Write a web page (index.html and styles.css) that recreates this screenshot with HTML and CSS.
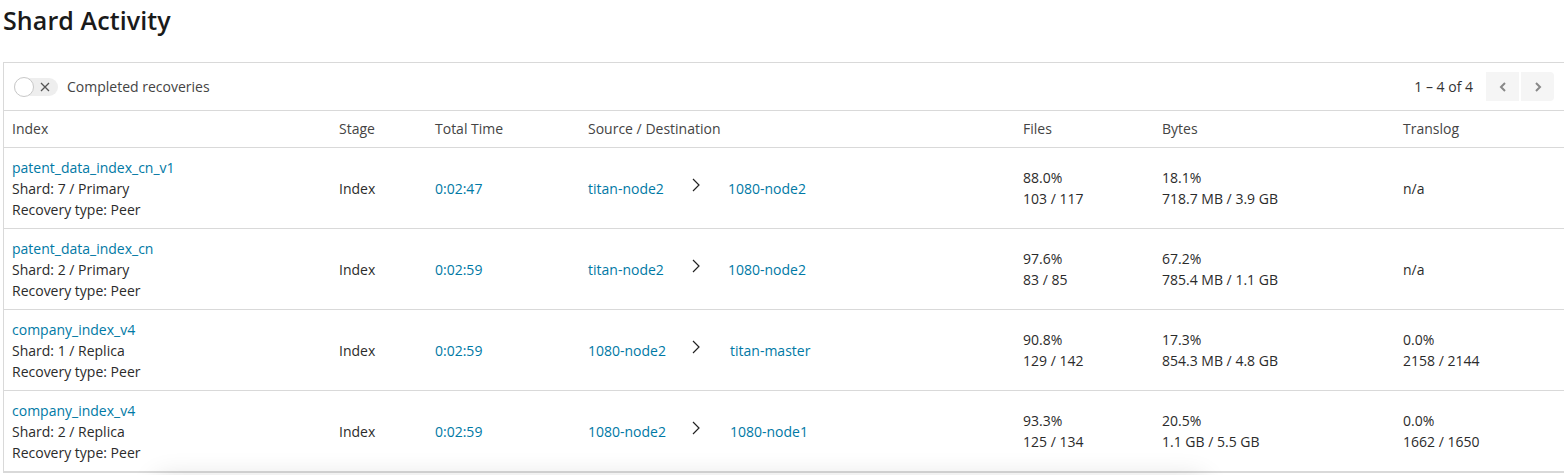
FILE: index.html
```html
<!DOCTYPE html>
<html lang="en">
<head>
<meta charset="utf-8">
<title>Shard Activity</title>
<link rel="stylesheet" href="styles.css">
</head>
<body>
<div class="page">
  <h1 class="title">Shard Activity</h1>
  <div class="panel">
    <div class="toolbar">
      <div class="toggle-wrap">
        <span class="toggle">
          <span class="knob"></span>
          <svg class="toggle-x" width="10" height="10" viewBox="0 0 10 10"><path d="M1 1L9 9M9 1L1 9" stroke="#555" stroke-width="1.3" fill="none"/></svg>
        </span>
        <span class="toggle-label">Completed recoveries</span>
      </div>
      <div class="pager">
        <span class="pager-range">1 – 4 of 4</span>
        <span class="pager-btn"><svg width="10" height="12" viewBox="0 0 10 12"><path d="M7 2L3 6L7 10" stroke="#888" stroke-width="2" fill="none"/></svg></span>
        <span class="pager-btn"><svg width="10" height="12" viewBox="0 0 10 12"><path d="M3 2L7 6L3 10" stroke="#888" stroke-width="2" fill="none"/></svg></span>
      </div>
    </div>
    <table class="grid">
      <colgroup>
        <col class="c-index"><col class="c-stage"><col class="c-time"><col class="c-src"><col class="c-files"><col class="c-bytes"><col class="c-trans">
      </colgroup>
      <thead>
        <tr><th>Index</th><th>Stage</th><th>Total Time</th><th>Source / Destination</th><th>Files</th><th>Bytes</th><th>Translog</th></tr>
      </thead>
      <tbody>
        <tr>
          <td><a class="link">patent_data_index_cn_v1</a><div>Shard: 7 / Primary</div><div>Recovery type: Peer</div></td>
          <td>Index</td>
          <td><a class="link">0:02:47</a></td>
          <td><div class="route"><a class="link src">titan-node2</a><svg class="arrow" width="8" height="14" viewBox="0 0 8 14"><path d="M1 1L7 7L1 13" stroke="#222" stroke-width="1.2" fill="none"/></svg><a class="link">1080-node2</a></div></td>
          <td><div>88.0%</div><div>103 / 117</div></td>
          <td><div>18.1%</div><div>718.7 MB / 3.9 GB</div></td>
          <td>n/a</td>
        </tr>
        <tr>
          <td><a class="link">patent_data_index_cn</a><div>Shard: 2 / Primary</div><div>Recovery type: Peer</div></td>
          <td>Index</td>
          <td><a class="link">0:02:59</a></td>
          <td><div class="route"><a class="link src">titan-node2</a><svg class="arrow" width="8" height="14" viewBox="0 0 8 14"><path d="M1 1L7 7L1 13" stroke="#222" stroke-width="1.2" fill="none"/></svg><a class="link">1080-node2</a></div></td>
          <td><div>97.6%</div><div>83 / 85</div></td>
          <td><div>67.2%</div><div>785.4 MB / 1.1 GB</div></td>
          <td>n/a</td>
        </tr>
        <tr>
          <td><a class="link">company_index_v4</a><div>Shard: 1 / Replica</div><div>Recovery type: Peer</div></td>
          <td>Index</td>
          <td><a class="link">0:02:59</a></td>
          <td><div class="route"><a class="link src">1080-node2</a><svg class="arrow" width="8" height="14" viewBox="0 0 8 14"><path d="M1 1L7 7L1 13" stroke="#222" stroke-width="1.2" fill="none"/></svg><a class="link dst">titan-master</a></div></td>
          <td><div>90.8%</div><div>129 / 142</div></td>
          <td><div>17.3%</div><div>854.3 MB / 4.8 GB</div></td>
          <td><div>0.0%</div><div>2158 / 2144</div></td>
        </tr>
        <tr>
          <td><a class="link">company_index_v4</a><div>Shard: 2 / Replica</div><div>Recovery type: Peer</div></td>
          <td>Index</td>
          <td><a class="link">0:02:59</a></td>
          <td><div class="route"><a class="link src">1080-node2</a><svg class="arrow" width="8" height="14" viewBox="0 0 8 14"><path d="M1 1L7 7L1 13" stroke="#222" stroke-width="1.2" fill="none"/></svg><a class="link dst">1080-node1</a></div></td>
          <td><div>93.3%</div><div>125 / 134</div></td>
          <td><div>20.5%</div><div>1.1 GB / 5.5 GB</div></td>
          <td><div>0.0%</div><div>1662 / 1650</div></td>
        </tr>
      </tbody>
    </table>
  </div>
  <div class="toast-shadow"></div>
</div>
</body>
</html>
```
FILE: styles.css
```css
html, body {
  margin: 0;
  padding: 0;
  background: #fff;
}
body {
  font-family: "Open Sans", "Liberation Sans", sans-serif;
  font-size: 14px;
  color: #2b2b2b;
  overflow: hidden;
}
.page {
  position: relative;
  box-sizing: border-box;
  padding: 4px 0 0 3px;
  height: 475px;
  overflow: hidden;
}
.title {
  margin: 0;
  font-size: 25px;
  line-height: 32px;
  font-weight: 600;
  color: #1a1a1a;
  letter-spacing: 0.1px;
}
.panel {
  margin-top: 26px;
  border: 1px solid #d9d9d9;
  border-right: none;
  background: #fff;
}
.toolbar {
  height: 47px;
  display: flex;
  align-items: center;
  justify-content: space-between;
  padding: 0 10px;
  border-bottom: 1px solid #d9d9d9;
}
.toggle-wrap {
  display: flex;
  align-items: center;
  gap: 9px;
}
.toggle {
  position: relative;
  width: 44px;
  height: 18px;
  border-radius: 9px;
  background: #eeeeee;
}
.knob {
  position: absolute;
  left: 0;
  top: -1px;
  width: 18px;
  height: 18px;
  border-radius: 50%;
  background: #fff;
  border: 1px solid #c8c8c8;
}
.toggle-x {
  position: absolute;
  left: 26px;
  top: 4px;
}
.toggle-label {
  color: #444;
  line-height: 20px;
}
.pager {
  display: flex;
  align-items: center;
}
.pager-range {
  color: #333;
  margin-right: 11px;
}
.pager-btn {
  width: 33px;
  height: 29px;
  background: #f5f5f5;
  display: flex;
  align-items: center;
  justify-content: center;
  margin-left: 2px;
}
.pager-btn:first-of-type {
  border-radius: 4px 0 0 4px;
}
.pager-btn:last-child {
  border-radius: 0 4px 4px 0;
}
.grid {
  width: 100%;
  border-collapse: collapse;
  table-layout: fixed;
}
.c-index { width: 327px; }
.c-stage { width: 96px; }
.c-time { width: 153px; }
.c-src { width: 435px; }
.c-files { width: 139px; }
.c-bytes { width: 241px; }
.grid th {
  text-align: left;
  font-weight: 400;
  color: #444;
  height: 36px;
  padding: 0 8px;
  border-bottom: 1px solid #d9d9d9;
  line-height: 20px;
}
.grid td {
  height: 81px;
  box-sizing: border-box;
  padding: 8px;
  border-bottom: 1px solid #d9d9d9;
  line-height: 21px;
  vertical-align: middle;
  color: #2b2b2b;
}
.link {
  color: #0079a5;
  display: block;
  text-decoration: none;
}
.route {
  display: flex;
  align-items: center;
}
.route .link {
  display: inline-block;
}
.src {
  width: 104px;
}
.arrow {
  margin-right: 28px;
  transform: translateY(-3px);
}
.dst {
  margin-left: 2px;
}
.toast-shadow {
  position: absolute;
  left: 160px;
  width: 1040px;
  top: 482px;
  height: 40px;
  border-radius: 6px;
  box-shadow: 0 0 26px 6px rgba(0, 0, 0, 0.12);
}
```
